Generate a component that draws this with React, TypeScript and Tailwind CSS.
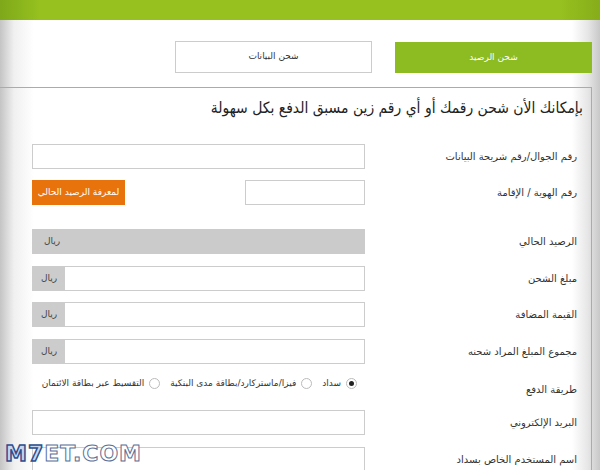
const AR = "font-['DejaVu_Sans','Liberation_Sans',sans-serif]";

function Field({ label, children, className = '' }: { label: string; children: React.ReactNode; className?: string }) {
  return (
    <div className={`flex items-center h-[25px] ${className}`}>
      <div className="w-[226px] shrink-0 pr-[14px] text-right text-[10px] leading-[14px] text-[#333]">{label}</div>
      <div className="w-[333px] shrink-0 h-full flex">{children}</div>
    </div>
  );
}

function TextBox({ className = 'w-full' }: { className?: string }) {
  return <div className={`h-full border border-[#ccc] bg-white ${className}`} />;
}

function Riyal() {
  return (
    <div className="w-full h-full flex border border-[#ccc] bg-white">
      <div className="flex-1" />
      <div className="w-[32px] h-full bg-[#ccc] flex items-center justify-center text-[9px] text-[#444]">ريال</div>
    </div>
  );
}

function Radio({ label, checked = false }: { label: string; checked?: boolean }) {
  return (
    <div className="flex items-center gap-[5px]">
      <span className="w-[11px] h-[11px] rounded-full border border-[#bbb] bg-white flex items-center justify-center">
        {checked && <span className="w-[5px] h-[5px] rounded-full bg-[#222]" />}
      </span>
      <span className="text-[9px] text-[#333]">{label}</span>
    </div>
  );
}

export default function App() {
  return (
    <div
      dir="rtl"
      className={`relative w-[600px] h-[470px] overflow-hidden text-right ${AR} bg-[linear-gradient(to_right,#c4c4c4,#f0f0f0_14px,#fff_34px,#fff_572px,#e6e6e6_588px,#c8c8c8)]`}
    >
      <div className="h-[20px] bg-[linear-gradient(to_right,#7fa81a,#96c11f_40px,#96c11f_560px,#86ad1a)]" />

      <div className="flex mt-[22px] mr-[8px] h-[31px] gap-[23px]">
        <div className="w-[197px] bg-[#8dbb22] flex items-center justify-center text-[9px] text-white">شحن الرصيد</div>
        <div className="w-[197px] mt-[-1px] h-[32px] border border-[#ccc] bg-white flex items-center justify-center text-[9px] text-[#333]">
          شحن البيانات
        </div>
      </div>

      <div className="mt-[14px] mr-[8px] border-t border-r border-[#a8b38c] h-[400px]">
        <div className="pr-[8px] pt-[8px] text-[15.5px] leading-[24px] text-[#222] font-['DejaVu_Sans_Condensed','DejaVu_Sans',sans-serif]">
          بإمكانك الأن شحن رقمك أو أي رقم زين مسبق الدفع بكل سهولة
        </div>

        <div className="mt-[24px] flex flex-col">
          <Field label="رقم الجوال/رقم شريحة البيانات">
            <TextBox />
          </Field>
          <Field label="رقم الهوية / الإقامة" className="mt-[11px]">
            <div className="w-full h-full flex justify-between">
              <TextBox className="w-[120px]" />
              <div className="w-[93px] h-full bg-[#e8720c] flex items-center justify-center text-[9px] text-white">
                لمعرفة الرصيد الحالي
              </div>
            </div>
          </Field>
          <Field label="الرصيد الحالي" className="mt-[24px]">
            <div className="w-full h-full bg-[#cbcbcb] flex items-center justify-end pl-[12px] text-[9px] text-[#444]">ريال</div>
          </Field>
          <Field label="مبلغ الشحن" className="mt-[12px]">
            <Riyal />
          </Field>
          <Field label="القيمة المضافة" className="mt-[11px]">
            <Riyal />
          </Field>
          <Field label="مجموع المبلغ المراد شحنه" className="mt-[12px]">
            <Riyal />
          </Field>
          <div className="flex mt-[11px] h-[33px]">
            <div className="w-[226px] shrink-0 pr-[14px] pt-[7px] text-[10px] text-[#333]">طريقة الدفع</div>
            <div className="w-[333px] shrink-0 flex items-start pt-[2px] pr-[8px] gap-[10px]">
              <Radio label="سداد" checked />
              <Radio label="فيزا/ماستركارد/بطاقة مدى البنكية" />
              <Radio label="التقسيط عبر بطاقة الائتمان" />
            </div>
          </div>
          <Field label="البريد الإلكتروني" className="mt-[2px]">
            <TextBox />
          </Field>
          <Field label="اسم المستخدم الخاص بسداد" className="mt-[12px]">
            <TextBox />
          </Field>
        </div>
      </div>

      <div
        dir="ltr"
        className="absolute left-[5px] bottom-[4px] font-['DejaVu_Sans',sans-serif] font-bold text-[22px] leading-[24px] tracking-[1px] text-white [-webkit-text-stroke:1px_#5a6f96]"
      >
        <span className="text-[#c9d6ee] [-webkit-text-stroke:1.5px_#2d4f8f]">M7</span>ET.COM
      </div>
    </div>
  );
}
